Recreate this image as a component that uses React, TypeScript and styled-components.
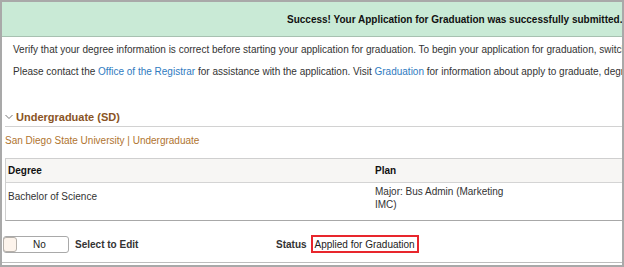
import React from 'react';
import styled, { createGlobalStyle } from 'styled-components';

const GlobalStyle = createGlobalStyle`
  html, body {
    margin: 0;
    padding: 0;
    background: #ffffff;
  }
  body {
    font-family: "Liberation Sans", Arial, sans-serif;
    color: #333333;
  }
`;

const Frame = styled.div`
  width: 624px;
  height: 267px;
  box-sizing: border-box;
  border: 2px solid #a9a9a9;
  overflow: hidden;
  background: #ffffff;
`;

const Banner = styled.div`
  height: 34px;
  background: #c9ead6;
  border-bottom: 1px solid #a7c1b1;
  display: flex;
  align-items: center;
  padding-left: 285px;
  white-space: nowrap;
  overflow: hidden;
  font-size: 10px;
  font-weight: bold;
  color: #111111;
`;

const Intro = styled.div`
  padding: 7px 0 0 11px;
  display: flex;
  flex-direction: column;
  gap: 10px;
`;

const Para = styled.p`
  margin: 0;
  font-size: 10px;
  line-height: 12px;
  white-space: nowrap;
  color: #333333;
`;

const Link = styled.a`
  color: #2f7bbf;
  text-decoration: none;
`;

const Section = styled.section`
  margin-top: 32px;
  padding-left: 3px;
`;

const SectionHeader = styled.div`
  display: flex;
  align-items: center;
  gap: 3px;
  height: 14px;
  padding-bottom: 2px;
  border-bottom: 1px solid #d2d2d2;
  font-size: 11px;
  font-weight: bold;
  color: #8a5424;
`;

const SubTitle = styled.div`
  margin-top: 8px;
  font-size: 10px;
  line-height: 12px;
  color: #b0742f;
`;

const Table = styled.div`
  margin-top: 11px;
  width: 640px;
  border-top: 1px solid #cfcfcf;
  border-left: 1px solid #cfcfcf;
  border-bottom: 1px solid #a8a8a8;
`;

const Row = styled.div<{ $head?: boolean }>`
  display: grid;
  grid-template-columns: 367px 1fr;
  height: ${(p) => (p.$head ? '23px' : '37px')};
  background: ${(p) => (p.$head ? '#f7f6f4' : '#ffffff')};
  border-bottom: ${(p) => (p.$head ? '1px solid #d4d4d4' : 'none')};
  font-size: 10px;
  line-height: 13px;
  font-weight: ${(p) => (p.$head ? 'bold' : 'normal')};
  color: ${(p) => (p.$head ? '#111111' : '#333333')};
`;

const Cell = styled.div<{ $top: number }>`
  padding: ${(p) => p.$top}px 0 0 2px;
`;

const PlanText = styled.div`
  max-width: 142px;
`;

const ActionRow = styled.div`
  margin-top: 14px;
  padding: 0 0 9px 1px;
  border-bottom: 1px solid #bdbdbd;
  display: grid;
  grid-template-columns: 273px auto;
  align-items: center;
  font-size: 10px;
`;

const EditGroup = styled.div`
  display: flex;
  align-items: center;
  gap: 6px;
`;

const Toggle = styled.div`
  width: 66px;
  height: 17px;
  box-sizing: border-box;
  border: 1px solid #a9a9a9;
  border-radius: 3px;
  background: #ffffff;
  display: flex;
  align-items: center;
`;

const Knob = styled.span`
  width: 14px;
  height: 15px;
  box-sizing: border-box;
  border: 1px solid #b5b0aa;
  border-radius: 3px;
  background: #fdf4ec;
  margin-left: -1px;
`;

const ToggleText = styled.span`
  flex: 1;
  text-align: center;
  padding-right: 6px;
  color: #222222;
`;

const Bold = styled.span`
  font-weight: bold;
  color: #333333;
`;

const StatusGroup = styled.div`
  display: flex;
  align-items: center;
  gap: 4px;
`;

const StatusBox = styled.span`
  display: inline-flex;
  align-items: center;
  height: 18px;
  box-sizing: border-box;
  padding: 0 2px;
  border: 2px solid #e8262d;
  color: #222222;
`;

const Chevron = () => (
  <svg width="8" height="6" viewBox="0 0 8 6">
    <path d="M0.5 1 L4 4.5 L7.5 1" fill="none" stroke="#777" strokeWidth="1" />
  </svg>
);

export default function App() {
  return (
    <>
      <GlobalStyle />
      <Frame>
        <Banner>Success! Your Application for Graduation was successfully submitted.</Banner>
        <Intro>
          <Para>
            Verify that your degree information is correct before starting your application for graduation. To begin your application for graduation, switch
          </Para>
          <Para>
            Please contact the <Link>Office of the Registrar</Link> for assistance with the application. Visit{' '}
            <Link>Graduation</Link> for information about apply to graduate, degree
          </Para>
        </Intro>
        <Section>
          <SectionHeader>
            <Chevron />
            Undergraduate (SD)
          </SectionHeader>
          <SubTitle>San Diego State University | Undergraduate</SubTitle>
          <Table>
            <Row $head>
              <Cell $top={5}>Degree</Cell>
              <Cell $top={5}>Plan</Cell>
            </Row>
            <Row>
              <Cell $top={7}>Bachelor of Science</Cell>
              <Cell $top={2}>
                <PlanText>Major: Bus Admin (Marketing IMC)</PlanText>
              </Cell>
            </Row>
          </Table>
        </Section>
        <ActionRow>
          <EditGroup>
            <Toggle>
              <Knob />
              <ToggleText>No</ToggleText>
            </Toggle>
            <Bold>Select to Edit</Bold>
          </EditGroup>
          <StatusGroup>
            <Bold>Status</Bold>
            <StatusBox>Applied for Graduation</StatusBox>
          </StatusGroup>
        </ActionRow>
      </Frame>
    </>
  );
}
